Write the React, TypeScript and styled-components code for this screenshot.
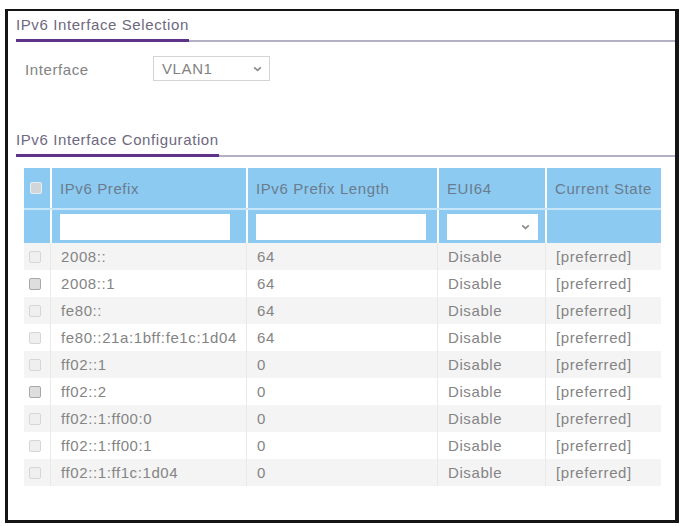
import React from "react";
import styled, { createGlobalStyle } from "styled-components";

const GlobalStyle = createGlobalStyle`
  html, body {
    margin: 0;
    padding: 0;
    background: #fff;
  }
  body {
    font-family: "Liberation Sans", Arial, sans-serif;
    font-size: 15px;
    letter-spacing: 0.6px;
  }
`;

const COLS = "26px 196px 191px 108px 116px";

const Frame = styled.div`
  box-sizing: border-box;
  margin: 9px 0 0 5px;
  width: 674px;
  height: 514px;
  border-style: solid;
  border-color: #151515;
  border-width: 2px 4px 3px 3px;
  padding: 5px 0 0 8px;
  background: #fff;
`;

const SectionHead = styled.div<{ $top?: number }>`
  display: flex;
  margin-top: ${(p) => p.$top ?? 0}px;
  border-bottom: 2px solid #b4b0c4;
`;

const SectionTitle = styled.h2`
  margin: 0 0 -2px;
  padding-bottom: 5px;
  border-bottom: 3px solid #5f3388;
  font-size: 15px;
  font-weight: normal;
  line-height: 18px;
  color: #6e6880;
`;

const FieldRow = styled.div`
  display: flex;
  align-items: center;
  height: 25px;
  margin-top: 14px;
  padding-left: 9px;
`;

const FieldLabel = styled.span`
  width: 128px;
  color: #828282;
  position: relative;
  top: 1px;
`;

const SelectBox = styled.div<{ $width: number }>`
  box-sizing: border-box;
  display: flex;
  align-items: center;
  justify-content: space-between;
  width: ${(p) => p.$width}px;
  height: 100%;
  padding: 0 7px 0 8px;
  border: 1px solid #d4d4d4;
  background: #fff;
  color: #828282;
`;

const Table = styled.div`
  width: 637px;
  margin: 11px 0 0 8px;
`;

const HeadRow = styled.div<{ $h: number; $line?: boolean }>`
  display: grid;
  grid-template-columns: ${COLS};
  height: ${(p) => p.$h}px;
  background: #8ccaf1;
  border-top: ${(p) => (p.$line ? "2px solid #c8e6fa" : "none")};
  box-sizing: border-box;
`;

const HeadCell = styled.div<{ $first?: boolean }>`
  display: flex;
  align-items: center;
  padding-left: ${(p) => (p.$first ? 6 : 8)}px;
  border-left: ${(p) => (p.$first ? "none" : "2px solid #fff")};
  color: #6a7c8e;
  white-space: nowrap;
`;

const FilterInput = styled.input<{ $width: number }>`
  box-sizing: border-box;
  width: ${(p) => p.$width}px;
  height: 26px;
  border: none;
  background: #fff;
  outline: none;
`;

const FilterSelect = styled.div`
  box-sizing: border-box;
  display: flex;
  align-items: center;
  justify-content: flex-end;
  width: 91px;
  height: 26px;
  padding-right: 8px;
  background: #fff;
`;

const DataRow = styled.div<{ $shade: boolean }>`
  display: grid;
  grid-template-columns: ${COLS};
  height: 27px;
  background: ${(p) => (p.$shade ? "#f4f4f4" : "#fff")};
`;

const DataCell = styled.div<{ $first?: boolean }>`
  display: flex;
  align-items: center;
  padding-left: ${(p) => (p.$first ? 5 : 10)}px;
  border-left: ${(p) => (p.$first ? "none" : "1px solid #e9e9e9")};
  color: #848484;
  white-space: nowrap;
`;

const Check = styled.span<{ $strong?: boolean; $head?: boolean }>`
  box-sizing: border-box;
  display: inline-block;
  width: 12px;
  height: 12px;
  border-radius: 2px;
  border: 1px solid ${(p) => (p.$head ? "#e4eef5" : p.$strong ? "#a9a9a9" : "#d6d6d6")};
  background: ${(p) => (p.$head ? "#d3d6d9" : p.$strong ? "#dedede" : "#efefef")};
`;

const Chevron = () => (
  <svg width="9" height="6" viewBox="0 0 9 6">
    <path d="M1.2 1.3 L4.5 4.4 L7.8 1.3" fill="none" stroke="#8a8a8a" strokeWidth="1.7" />
  </svg>
);

const rows = [
  ["2008::", "64"],
  ["2008::1", "64"],
  ["fe80::", "64"],
  ["fe80::21a:1bff:fe1c:1d04", "64"],
  ["ff02::1", "0"],
  ["ff02::2", "0"],
  ["ff02::1:ff00:0", "0"],
  ["ff02::1:ff00:1", "0"],
  ["ff02::1:ff1c:1d04", "0"],
];

export default function App() {
  return (
    <>
      <GlobalStyle />
      <Frame>
        <SectionHead>
          <SectionTitle>IPv6 Interface Selection</SectionTitle>
        </SectionHead>
        <FieldRow>
          <FieldLabel>Interface</FieldLabel>
          <SelectBox $width={117}>
            VLAN1
            <Chevron />
          </SelectBox>
        </FieldRow>

        <SectionHead $top={50}>
          <SectionTitle>IPv6 Interface Configuration</SectionTitle>
        </SectionHead>

        <Table>
          <HeadRow $h={40}>
            <HeadCell $first>
              <Check $head />
            </HeadCell>
            <HeadCell>IPv6 Prefix</HeadCell>
            <HeadCell>IPv6 Prefix Length</HeadCell>
            <HeadCell>EUI64</HeadCell>
            <HeadCell>Current State</HeadCell>
          </HeadRow>
          <HeadRow $h={35} $line>
            <HeadCell $first />
            <HeadCell>
              <FilterInput $width={170} />
            </HeadCell>
            <HeadCell>
              <FilterInput $width={170} />
            </HeadCell>
            <HeadCell>
              <FilterSelect>
                <Chevron />
              </FilterSelect>
            </HeadCell>
            <HeadCell />
          </HeadRow>
          {rows.map(([prefix, len], i) => (
            <DataRow key={prefix} $shade={i % 2 === 0}>
              <DataCell $first>
                <Check $strong={i === 1 || i === 5} />
              </DataCell>
              <DataCell>{prefix}</DataCell>
              <DataCell>{len}</DataCell>
              <DataCell>Disable</DataCell>
              <DataCell>[preferred]</DataCell>
            </DataRow>
          ))}
        </Table>
      </Frame>
    </>
  );
}
